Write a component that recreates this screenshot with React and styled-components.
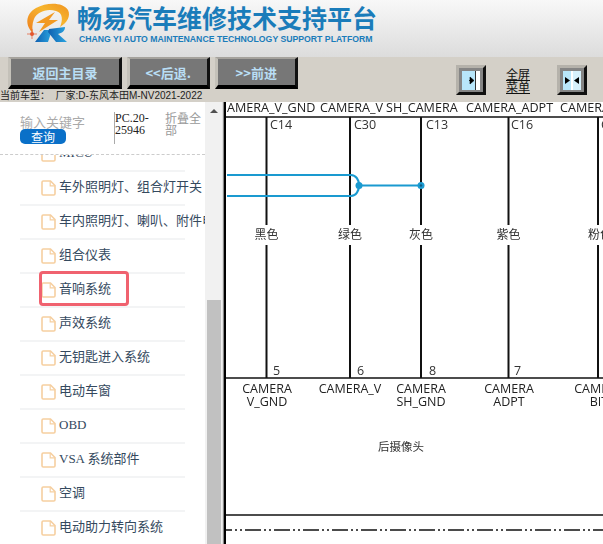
import React from "react";
import styled, { createGlobalStyle } from "styled-components";

const ROWS = [
  { name: "车外照明灯、组合灯开关" },
  { name: "车内照明灯、喇叭、附件电源" },
  { name: "组合仪表" },
  { name: "音响系统", marked: true },
  { name: "声效系统" },
  { name: "无钥匙进入系统" },
  { name: "电动车窗" },
  { name: "OBD" },
  { name: "VSA 系统部件" },
  { name: "空调" },
  { name: "电动助力转向系统" },
];

const WIRES = [266.5, 350, 421, 508.5, 598];
const TOP_LABELS = [
  { x: 227, text: "AMERA_V_GND" },
  { x: 320, text: "CAMERA_V" },
  { x: 386, text: "SH_CAMERA" },
  { x: 466, text: "CAMERA_ADPT" },
  { x: 560, text: "CAMERA" },
];
const PINS = [
  { x: 270, top: "C14", bottom: "5", color: "黑色", wx: 266.5 },
  { x: 354, top: "C30", bottom: "6", color: "绿色", wx: 350 },
  { x: 426, top: "C13", bottom: "8", color: "灰色", wx: 421 },
  { x: 511, top: "C16", bottom: "7", color: "紫色", wx: 508.5 },
  { x: 601, top: "C", bottom: "", color: "粉色", wx: 600 },
];
const BOTTOM_LABELS = [
  { x: 267, lines: ["CAMERA", "V_GND"] },
  { x: 350, lines: ["CAMERA_V"] },
  { x: 421, lines: ["CAMERA", "SH_GND"] },
  { x: 509, lines: ["CAMERA", "ADPT"] },
  { x: 599, lines: ["CAMERA", "BIT"] },
];

const FileSvg = styled.svg`
  flex: none;
`;

const FileIcon = () => (
  <FileSvg width="15" height="16" viewBox="0 0 15 16" fill="none">
    <path
      d="M1 2.2C1 1.5 1.5 1 2.2 1H9.5L14 5.5V13.8C14 14.5 13.5 15 12.8 15H2.2C1.5 15 1 14.5 1 13.8Z"
      stroke="#f6cfa0"
      strokeWidth="1.6"
    />
    <path d="M9.2 1V5.8H14" stroke="#f6cfa0" strokeWidth="1.2" />
  </FileSvg>
);

const Logo = () => (
  <svg width="46" height="42" viewBox="0 0 46 42">
    <defs>
      <linearGradient id="ring" x1="0" y1="1" x2="1" y2="0">
        <stop offset="0" stopColor="#ee7d1c" />
        <stop offset="0.6" stopColor="#f6b52e" />
        <stop offset="1" stopColor="#f0931f" />
      </linearGradient>
      <linearGradient id="leg" x1="0" y1="0" x2="1" y2="0">
        <stop offset="0" stopColor="#0f5fb0" />
        <stop offset="1" stopColor="#2aa5e0" />
      </linearGradient>
    </defs>
    <path
      d="M8 31C0 24 0 12 11 6C22 0 38 0 43 8C46 14 42 21 35 25C38 18 38 11 31 9C22 6 12 10 9 17C7 22 7 27 8 31Z"
      fill="url(#ring)"
    />
    <path d="M30 10L11 21L20 21L14 30L33 18L24 18Z" fill="#f29a22" />
    <circle cx="7" cy="32" r="2" fill="#e4572e" />
    <path d="M2 32H12M7 27V37" stroke="#e4572e" strokeWidth="0.7" />
    <path d="M10 40L19 28H27L23 40Z" fill="url(#leg)" />
    <path d="M24 27L40 25C40 29 37 31 33 32L42 40H31L23 30Z" fill="url(#leg)" />
  </svg>
);

const PlayIcon = ({ double }) => (
  <svg width="18" height="19" viewBox="0 0 18 19">
    <rect width="18" height="19" fill="#fff" />
    {double ? (
      <>
        <rect width="8" height="19" fill="#b8e6fa" />
        <rect x="10" width="8" height="19" fill="#d6f0fb" />
        <path d="M2 6L7 9.5L2 13Z" fill="#000" />
        <path d="M16 6L11 9.5L16 13Z" fill="#000" />
      </>
    ) : (
      <>
        <rect width="13" height="19" fill="#b8e6fa" />
        <rect x="13" width="1" height="19" fill="#333" />
        <path d="M7 9.5H8V6L12 9.5L8 13V9.5Z" fill="#000" stroke="#000" strokeWidth="0.6" />
      </>
    )}
  </svg>
);

const Diagram = () => (
  <DiagramSvg viewBox="226 102 377 442" width="377" height="442">
    <rect x="226" y="102" width="377" height="442" fill="#fff" />
    <g fill="#222" fontSize="12.6">
      {TOP_LABELS.map((l) => (
        <text key={l.x} x={l.x} y="112">
          {l.text}
        </text>
      ))}
    </g>
    <g stroke="#111" strokeWidth="1.5">
      <line x1="226" y1="117" x2="603" y2="117" />
      <line x1="226" y1="378" x2="603" y2="378" />
      <line x1="226" y1="515" x2="603" y2="515" />
      {WIRES.map((x) => (
        <React.Fragment key={x}>
          <line x1={x} y1="117" x2={x} y2="225" strokeWidth="2" />
          <line x1={x} y1="245" x2={x} y2="378" strokeWidth="2" />
        </React.Fragment>
      ))}
      <line
        x1="226"
        y1="530"
        x2="603"
        y2="530"
        strokeDasharray="16 3 2 3 2 3"
        strokeDashoffset="10"
        strokeWidth="1.3"
      />
    </g>
    <g fill="none" stroke="#1a9ad0" strokeWidth="2.2">
      <path d="M227 175H351C356 175 359 180 359 185C359 191 356 196 351 196H227" />
      <line x1="359" y1="185.5" x2="421" y2="185.5" />
    </g>
    <circle cx="359" cy="185.5" r="3.5" fill="#1a9ad0" />
    <circle cx="421" cy="185.5" r="3.5" fill="#1a9ad0" />
    <circle cx="421" cy="185.5" r="1.2" fill="#145a80" />
    <g fill="#333" fontSize="12.5">
      {PINS.map((p) => (
        <React.Fragment key={p.x}>
          <text x={p.x} y="129">
            {p.top}
          </text>
          <text x={p.x + 3} y="375">
            {p.bottom}
          </text>
        </React.Fragment>
      ))}
    </g>
    <g fill="#333" fontSize="12" textAnchor="middle">
      {PINS.map((p) => (
        <text key={p.x} x={p.wx} y="239">
          {p.color}
        </text>
      ))}
      <text x="401" y="451" fontSize="11.5">
        后摄像头
      </text>
    </g>
    <g fill="#222" fontSize="12.5" textAnchor="middle">
      {BOTTOM_LABELS.map((l) =>
        l.lines.map((line, i) => (
          <text key={line + l.x} x={l.x} y={393 + i * 13}>
            {line}
          </text>
        ))
      )}
    </g>
  </DiagramSvg>
);

export default function App() {
  return (
    <Page>
      <GlobalStyle />
      <Header>
        <Logo />
        <Brand>
          <BrandTitle>畅易汽车维修技术支持平台</BrandTitle>
          <BrandSub>CHANG YI AUTO MAINTENANCE TECHNOLOGY SUPPORT PLATFORM</BrandSub>
        </Brand>
      </Header>
      <TopBar>
        <TopLeft>
          <NavRow>
            <NavButton $w={114}>返回主目录</NavButton>
            <NavButton $w={83.5}>&lt;&lt;后退.</NavButton>
            <NavButton $w={83.5}>&gt;&gt;前进</NavButton>
          </NavRow>
          <CarInfo>当前车型：&nbsp;&nbsp;厂家:D-东风本田M-NV2021-2022</CarInfo>
        </TopLeft>
        <TopRight>
          <IconButton>
            <PlayIcon />
          </IconButton>
          <MenuLink>
            全屏
            <br />
            菜单
          </MenuLink>
          <IconButton>
            <PlayIcon double />
          </IconButton>
        </TopRight>
      </TopBar>
      <Main>
        <Sidebar>
          <SidePanel>
            <SearchBar>
              <SearchBox>
                <KeywordHint>输入关键字</KeywordHint>
                <SearchButton>查询</SearchButton>
              </SearchBox>
              <DocCode>PC.20-25946</DocCode>
              <Collapse>折叠全部</Collapse>
            </SearchBar>
            <TreeList>
              <TreeRow $first>
                <FileIcon />
                <RowName>MICU</RowName>
              </TreeRow>
              {ROWS.map((r) => (
                <TreeRow key={r.name} $marked={r.marked}>
                  <FileIcon />
                  <RowName>{r.name}</RowName>
                </TreeRow>
              ))}
            </TreeList>
          </SidePanel>
          <ScrollTrack>
            <ScrollArrow />
            <ScrollThumb />
          </ScrollTrack>
        </Sidebar>
        <Splitter />
        <Diagram />
      </Main>
    </Page>
  );
}

const GlobalStyle = createGlobalStyle`
  html, body {
    margin: 0;
    padding: 0;
    background: #fff;
    overflow: hidden;
  }
`;

const Page = styled.div`
  width: 603px;
  height: 544px;
  overflow: hidden;
  display: flex;
  flex-direction: column;
  font-family: "Liberation Serif", "Noto Sans CJK SC", serif;
`;

const Header = styled.div`
  height: 57px;
  flex: none;
  display: flex;
  align-items: flex-start;
  gap: 6px;
  padding: 2px 0 0 25px;
  box-sizing: border-box;
  background: linear-gradient(#f8f8f8, #dcdcdc);
`;

const Brand = styled.div`
  display: flex;
  flex-direction: column;
`;

const BrandTitle = styled.div`
  font-family: "Noto Sans CJK SC", sans-serif;
  font-size: 25px;
  line-height: 31px;
  font-weight: 700;
  color: #1a7cba;
  white-space: nowrap;
`;

const BrandSub = styled.div`
  font-family: "Liberation Sans", sans-serif;
  font-size: 8.7px;
  line-height: 12px;
  font-weight: 700;
  color: #1a7cba;
  margin-left: 2px;
  white-space: nowrap;
`;

const TopBar = styled.div`
  height: 45px;
  flex: none;
  display: flex;
  justify-content: space-between;
  background: #d4d0c8;
`;

const TopLeft = styled.div`
  display: flex;
  flex-direction: column;
`;

const NavRow = styled.div`
  display: flex;
  gap: 4.5px;
  padding-left: 8px;
  height: 33px;
`;

const NavButton = styled.div`
  width: ${(p) => p.$w}px;
  height: 32px;
  box-sizing: border-box;
  display: flex;
  align-items: center;
  justify-content: center;
  background: #777;
  color: #b9def5;
  font-family: "Noto Sans CJK SC", sans-serif;
  font-size: 13px;
  font-weight: 700;
  border-style: solid;
  border-width: 2px 3px 4px 3px;
  border-color: #a5a29c #111 #000 #c4c1b9;
`;

const CarInfo = styled.div`
  margin-top: 1px;
  font-family: "Liberation Sans", "Noto Sans CJK SC", sans-serif;
  font-size: 10px;
  line-height: 12px;
  color: #222;
  white-space: nowrap;
`;

const TopRight = styled.div`
  display: flex;
  align-items: flex-start;
  padding: 8px 16px 0 0;
`;

const IconButton = styled.div`
  width: 30px;
  height: 30px;
  box-sizing: border-box;
  display: flex;
  align-items: center;
  justify-content: center;
  background: #858585;
  border-style: solid;
  border-width: 3px;
  border-color: #b5b2ab #111 #111 #b5b2ab;
`;

const MenuLink = styled.div`
  width: 24px;
  margin: 2px 27px 0 20px;
  font-family: "Noto Sans CJK SC", sans-serif;
  font-size: 12px;
  line-height: 13px;
  color: #111;
  text-decoration: underline;
`;

const Main = styled.div`
  flex: 1;
  min-height: 0;
  display: flex;
  background: #fff;
`;

const Sidebar = styled.div`
  width: 222px;
  flex: none;
  display: flex;
`;

const SidePanel = styled.div`
  width: 205px;
  flex: none;
  overflow: hidden;
  display: flex;
  flex-direction: column;
`;

const SearchBar = styled.div`
  height: 53px;
  flex: none;
  box-sizing: border-box;
  display: flex;
  padding-top: 8px;
  border-bottom: 1px dashed #ccc;
`;

const SearchBox = styled.div`
  width: 94px;
  padding: 5px 0 0 20px;
  flex: none;
  box-sizing: border-box;
`;

const KeywordHint = styled.div`
  font-family: "Noto Sans CJK SC", sans-serif;
  font-size: 13px;
  line-height: 14px;
  color: #aaa;
  white-space: nowrap;
`;

const SearchButton = styled.div`
  width: 46px;
  height: 15px;
  border-radius: 5px;
  background: #0a70c8;
  color: #fff;
  font-family: "Noto Sans CJK SC", sans-serif;
  font-size: 12px;
  line-height: 15px;
  text-align: center;
`;

const DocCode = styled.div`
  width: 37px;
  height: 32px;
  margin: 2px 0 0 20px;
  flex: none;
  border-left: 1px solid #aaa;
  font-size: 12px;
  line-height: 12px;
  color: #222;
  word-break: break-all;
  box-sizing: border-box;
`;

const Collapse = styled.div`
  margin: 2px 0 0 14px;
  width: 38px;
  font-family: "Noto Sans CJK SC", sans-serif;
  font-size: 12px;
  line-height: 12px;
  color: #999;
`;

const TreeList = styled.div`
  flex: 1;
  min-height: 0;
  overflow: hidden;
`;

const TreeRow = styled.div`
  position: relative;
  width: 165px;
  height: 34px;
  margin: ${(p) => (p.$first ? "-17px" : "0")} 0 0 20px;
  box-sizing: border-box;
  padding-left: 21px;
  display: flex;
  align-items: center;
  gap: 3px;
  border-bottom: 2px solid #f3f4f5;

  &::after {
    content: "";
    display: ${(p) => (p.$marked ? "block" : "none")};
    position: absolute;
    left: 19px;
    top: -3px;
    width: 90px;
    height: 35px;
    box-sizing: border-box;
    border: 3px solid #f0626f;
    border-radius: 4px;
  }
`;

const RowName = styled.span`
  font-size: 13px;
  line-height: 16px;
  margin-top: -2px;
  color: #34495e;
  white-space: nowrap;
`;

const ScrollTrack = styled.div`
  width: 17px;
  flex: none;
  background: #f1f1f1;
  display: flex;
  flex-direction: column;
  justify-content: space-between;
`;

const ScrollArrow = styled.div`
  width: 0;
  height: 0;
  margin: 7px 0 0 5px;
  border-left: 4px solid transparent;
  border-right: 4px solid transparent;
  border-bottom: 4px solid #505050;
`;

const ScrollThumb = styled.div`
  width: 14px;
  height: 244px;
  margin-left: 2px;
  background: #c1c1c1;
`;

const Splitter = styled.div`
  width: 4px;
  flex: none;
  background: linear-gradient(to right, #e0e0e0 0 1px, #888 1px 2px, #000 2px);
`;

const DiagramSvg = styled.svg`
  flex: none;
  display: block;
  font-family: "Open Sans", "Noto Sans CJK SC", sans-serif;
  filter: blur(0.3px);
`;
